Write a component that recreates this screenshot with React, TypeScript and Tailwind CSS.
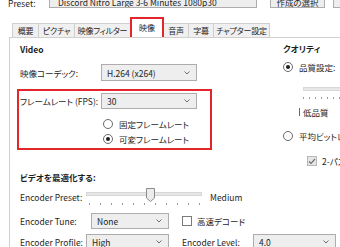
import React from "react";

const Chevron = () => (
  <svg width="6" height="4" viewBox="0 0 6 4" className="shrink-0">
    <path d="M0.5 0.5 L3 3 L5.5 0.5" fill="none" stroke="#6f6f6f" strokeWidth="1" />
  </svg>
);

const Select = ({ className, text }: { className: string; text: string }) => (
  <div
    className={`flex items-center justify-between border border-[#adadad] bg-[#eeeeee] pl-[5px] pr-[6px] shrink-0 ${className}`}
  >
    <span className="whitespace-nowrap">{text}</span>
    <Chevron />
  </div>
);

const Radio = ({ checked }: { checked?: boolean }) => (
  <span className="w-[10px] h-[10px] rounded-full border border-[#6a6a6a] bg-white flex items-center justify-center shrink-0">
    {checked && <span className="w-[4px] h-[4px] rounded-full bg-[#1e1e1e]" />}
  </span>
);

const Check = ({ checked }: { checked?: boolean }) =>
  checked ? (
    <span className="w-[10px] h-[10px] border border-[#b8b8b8] bg-[#e6e6e6] flex items-center justify-center shrink-0">
      <svg width="8" height="7" viewBox="0 0 8 7">
        <path d="M1 3.5 L3 5.5 L7 1" fill="none" stroke="#707070" strokeWidth="1.2" />
      </svg>
    </span>
  ) : (
    <span className="w-[10px] h-[10px] border border-[#7a7a7a] bg-white shrink-0" />
  );

const Tab = ({ label, className }: { label: string; className: string }) => (
  <div
    className={`h-[14px] flex items-center justify-center border border-b-0 border-[#cfcfcf] bg-[#f0f0f0] text-[8px] tracking-[-0.2px] whitespace-nowrap overflow-hidden -mr-px shrink-0 ${className}`}
  >
    {label}
  </div>
);

export default function App() {
  return (
    <div className="relative w-[340px] h-[247px] overflow-hidden bg-white text-[#1e1e1e] text-[8.5px] leading-[12px] font-['Noto_Sans_CJK_JP','Noto_Sans',sans-serif] [font-feature-settings:'palt']">
      {/* top bar (cut off) */}
      <div className="-mt-[10px] h-[18px] flex items-start whitespace-nowrap">
        <div className="w-[49px] pl-[8px] pt-[7px] shrink-0">Preset:</div>
        <div className="w-[208px] h-[18px] border border-[#adadad] bg-[#eeeeee] flex items-start justify-between pl-[8px] pr-[8px] pt-[5px] overflow-hidden shrink-0">
          <span>Discord Nitro Large 3-6 Minutes 1080p30</span>
          <Chevron />
        </div>
        <div className="ml-[13px] w-[55px] h-[18px] border border-[#adadad] bg-[#eeeeee] flex items-start justify-center pt-[5px] shrink-0">
          作成の選択
        </div>
        <div className="ml-[8px] w-[40px] h-[18px] border border-[#adadad] bg-[#eeeeee] shrink-0" />
      </div>

      {/* tabs */}
      <div className="mt-[15px] h-[14px] flex items-end pl-[12px]">
        <Tab label="概要" className="w-[27px]" />
        <Tab label="ピクチャ" className="w-[37px]" />
        <Tab label="映像フィルター" className="w-[57px]" />
        <div className="h-[20px] w-[34px] -mr-px border-2 border-b-0 border-[#e3262a] bg-white flex items-center justify-center text-[8px] relative z-10 shrink-0">
          映像
        </div>
        <Tab label="音声" className="w-[26px]" />
        <Tab label="字幕" className="w-[26px]" />
        <Tab label="チャプター設定" className="w-[57px]" />
      </div>

      {/* panel */}
      <div className="ml-[9px] border-l border-t border-[#d0d0d0] h-[220px] whitespace-nowrap">
        <div className="flex h-[130px]">
          {/* left column */}
          <div className="w-[261px] shrink-0 pl-[10px] flex flex-col">
            <div className="mt-[5px] font-bold">Video</div>
            <div className="mt-[9px] h-[17px] flex items-center">
              <div className="w-[81px] shrink-0">映像コーデック:</div>
              <Select className="w-[96px] h-[17px]" text="H.264 (x264)" />
            </div>
            <div className="mt-[8px] -ml-[3px] w-[195px] border-2 border-[#e3262a] pl-[1px] pt-[2px] pb-[3px]">
              <div className="h-[16px] flex items-center">
                <div className="w-[81px] shrink-0">フレームレート (FPS):</div>
                <Select className="w-[96px] h-[16px]" text="30" />
              </div>
              <div className="mt-[9px] h-[12px] flex items-center gap-[6px] pl-[83px]">
                <Radio />
                <span>固定フレームレート</span>
              </div>
              <div className="mt-[3px] h-[12px] flex items-center gap-[6px] pl-[83px]">
                <Radio checked />
                <span>可変フレームレート</span>
              </div>
            </div>
          </div>
          {/* right column */}
          <div className="w-[120px] shrink-0 flex flex-col pl-[12px]">
            <div className="mt-[4px] font-bold">クオリティ</div>
            <div className="mt-[7px] h-[12px] flex items-center gap-[6px]">
              <Radio checked />
              <span>品質設定:</span>
            </div>
            <div className="mt-[14px] ml-[20px] w-[80px] h-[4px] bg-[#e7e7e7] border border-[#d8d8d8]" />
            <div className="mt-[6px] ml-[20px] h-[2px] flex gap-[5px]">
              {Array.from({ length: 10 }).map((_, i) => (
                <span key={i} className="w-px h-[2px] bg-[#9a9a9a]" />
              ))}
            </div>
            <div className="mt-[7px] ml-[16px] h-[12px] flex items-center gap-[3px]">
              <span className="w-px h-[8px] bg-[#6a6a6a]" />
              <span>低品質</span>
            </div>
            <div className="mt-[12px] h-[12px] flex items-center gap-[6px]">
              <Radio />
              <span>平均ビットレート</span>
            </div>
            <div className="mt-[13px] ml-[24px] h-[12px] flex items-center gap-[5px]">
              <Check checked />
              <span>2-パス エンコード</span>
            </div>
          </div>
        </div>

        {/* bottom section */}
        <div className="pl-[10px] flex flex-col">
          <div className="mt-[3px] font-bold">ビデオを最適化する:</div>
          <div className="mt-[6px] h-[16px] flex items-center">
            <div className="w-[66px] shrink-0">Encoder Preset:</div>
            <svg width="116" height="18" viewBox="0 0 116 18" className="shrink-0">
              <rect x="0.5" y="4.5" width="115" height="3" fill="#e7e7e7" stroke="#d6d6d6" />
              {Array.from({ length: 11 }).map((_, i) => (
                <rect key={i} x={3 + i * 11} y="15" width="1" height="2" fill="#9a9a9a" />
              ))}
              <path d="M60.5 0.5 H68.5 V10 L64.5 13.5 L60.5 10 Z" fill="#ececec" stroke="#8a8a8a" />
            </svg>
            <div className="ml-[8px]">Medium</div>
          </div>
          <div className="mt-[8px] h-[16px] flex items-center">
            <div className="w-[71px] shrink-0">Encoder Tune:</div>
            <Select className="w-[78px] h-[16px]" text="None" />
            <div className="ml-[13px] flex items-center gap-[5px]">
              <Check />
              <span>高速デコード</span>
            </div>
          </div>
          <div className="mt-[5px] h-[16px] flex items-center">
            <div className="w-[66px] shrink-0">Encoder Profile:</div>
            <Select className="w-[83px] h-[16px]" text="High" />
            <div className="ml-[13px] w-[71px] shrink-0">Encoder Level:</div>
            <Select className="w-[83px] h-[16px]" text="4.0" />
          </div>
        </div>
      </div>
    </div>
  );
}
